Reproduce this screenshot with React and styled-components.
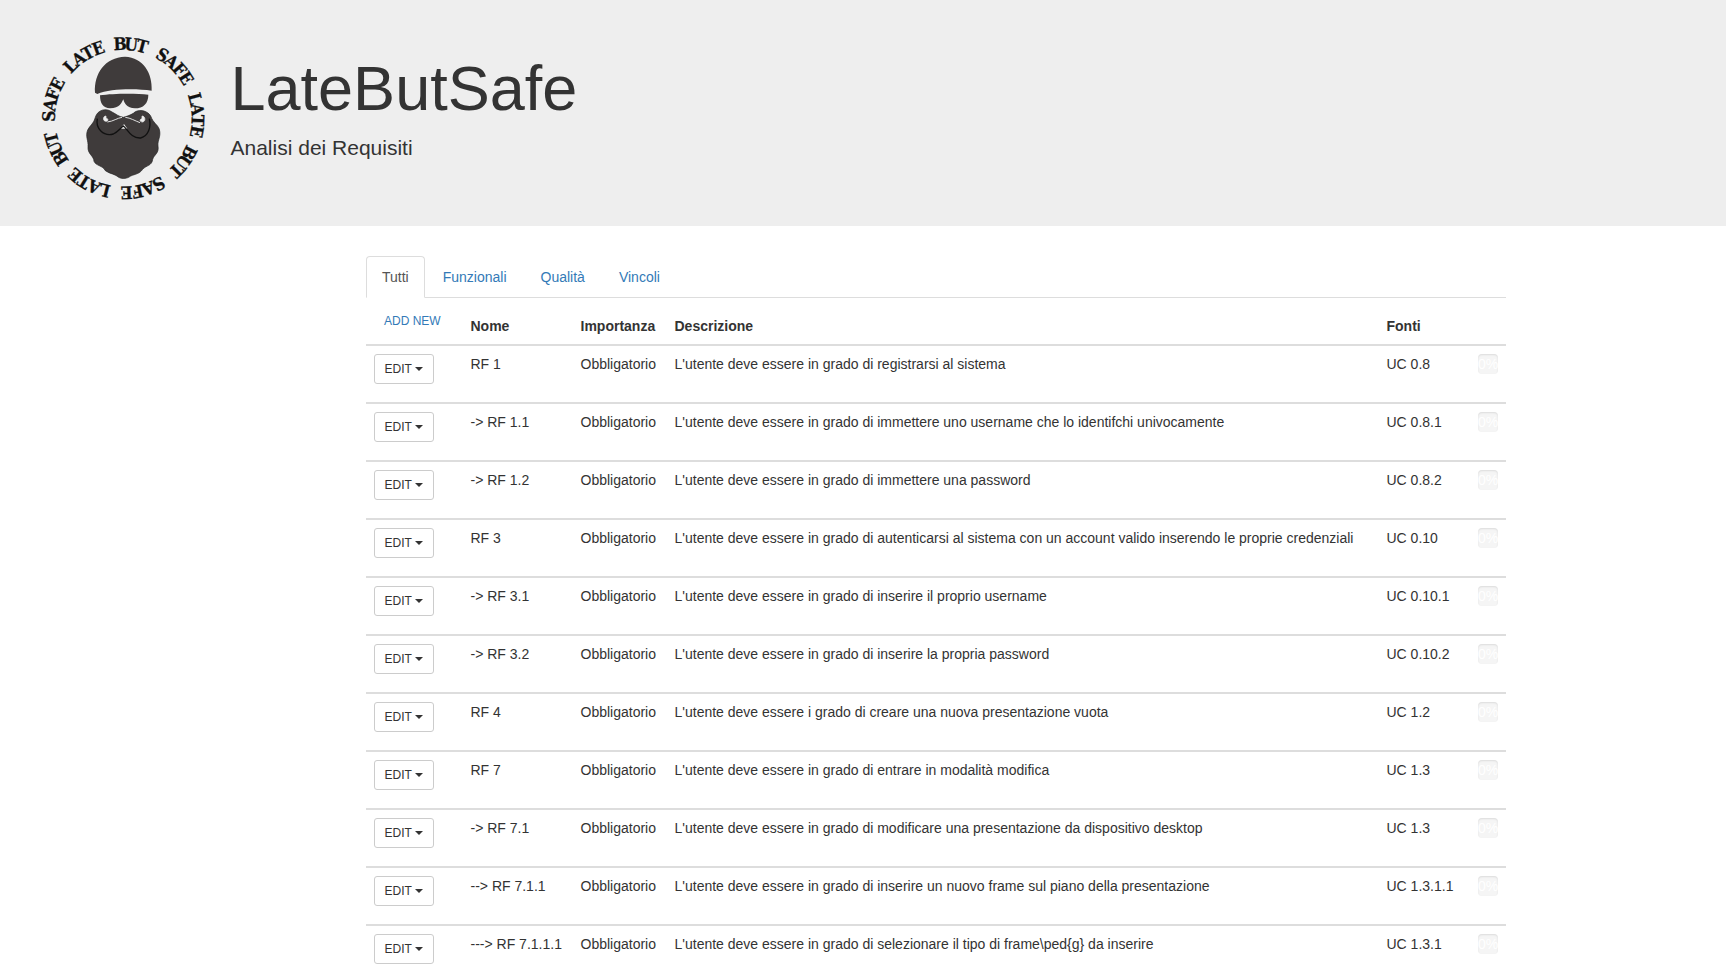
import React from "react";
import styled, { createGlobalStyle } from "styled-components";

const Global = createGlobalStyle`
  html, body { margin: 0; padding: 0; background: #fff; }
  body { font-family: "Liberation Sans", Arial, sans-serif; font-size: 14px; line-height: 20px; color: #333; }
  * { box-sizing: border-box; }
`;

const Jumbotron = styled.header`
  height: 226px; background: #eee; display: flex; align-items: flex-start;
  padding: 20px 0 0 20px; margin-bottom: 30px;
`;
const Titles = styled.div`margin-left: 10.5px;`;
const Title = styled.h1`
  font-size: 63px; line-height: 69px; font-weight: 500; margin: 34px 0 0; color: #333;
`;
const Subtitle = styled.p`
  font-size: 21px; line-height: 30px; font-weight: 200; margin: 10px 0 0; color: #333;
`;
const Container = styled.main`width: 1140px; margin: 0 0 0 366px;`;
const Tabs = styled.ul`
  display: flex; list-style: none; margin: 0; padding: 0; border-bottom: 1px solid #ddd; height: 42px;
`;
const Tab = styled.li`
  margin-right: 2px; height: 42px; padding: 10px 15px; border-radius: 4px 4px 0 0;
  border: 1px solid ${p => (p.$active ? "#ddd" : "transparent")};
  border-bottom-color: ${p => (p.$active ? "#fff" : "transparent")};
  background: ${p => (p.$active ? "#fff" : "transparent")};
  color: ${p => (p.$active ? "#555" : "#337ab7")};
`;
const Table = styled.table`
  width: 1140px; table-layout: fixed; border-collapse: separate; border-spacing: 0;
`;
const Th = styled.th`
  text-align: left; font-weight: 700; padding: 8px; vertical-align: bottom;
  border-bottom: 2px solid #ddd;
`;
const Td = styled.td`
  padding: 8px; vertical-align: top; height: 58px; border-bottom: 2px solid #ddd;
`;
const AddNew = styled.a`
  display: block; font-size: 12px; line-height: 18px; color: #337ab7; padding: 5px 10px;
  margin: 1px 0 1px; white-space: nowrap; font-weight: 400;
`;
const EditButton = styled.button`
  display: inline-flex; align-items: center; height: 30px; width: 60px; padding: 0 0 0 9.5px;
  border: 1px solid #ccc; border-radius: 3px; background: #fff; color: #333;
  font: 12px/18px "Liberation Sans", Arial, sans-serif; white-space: nowrap;
`;
const Caret = styled.span`
  display: inline-block; margin-left: 3.5px; width: 0; height: 0;
  border-top: 4px solid #333; border-left: 4px solid transparent; border-right: 4px solid transparent;
`;
const Progress = styled.div`
  width: 20px; height: 20px; border-radius: 4px; background: #f5f5f5; overflow: hidden;
  box-shadow: inset 0 1px 2px rgba(0,0,0,.1); display: flex; justify-content: center;
  color: #fff; font-size: 14px; line-height: 20px; white-space: nowrap;
`;

const Logo = styled.svg`width: 200px; height: 200px; flex: none;`;

const rows = [
  ["RF 1", "L'utente deve essere in grado di registrarsi al sistema", "UC 0.8"],
  ["-> RF 1.1", "L'utente deve essere in grado di immettere uno username che lo identifchi univocamente", "UC 0.8.1"],
  ["-> RF 1.2", "L'utente deve essere in grado di immettere una password", "UC 0.8.2"],
  ["RF 3", "L'utente deve essere in grado di autenticarsi al sistema con un account valido inserendo le proprie credenziali", "UC 0.10"],
  ["-> RF 3.1", "L'utente deve essere in grado di inserire il proprio username", "UC 0.10.1"],
  ["-> RF 3.2", "L'utente deve essere in grado di inserire la propria password", "UC 0.10.2"],
  ["RF 4", "L'utente deve essere i grado di creare una nuova presentazione vuota", "UC 1.2"],
  ["RF 7", "L'utente deve essere in grado di entrare in modalità modifica", "UC 1.3"],
  ["-> RF 7.1", "L'utente deve essere in grado di modificare una presentazione da dispositivo desktop", "UC 1.3"],
  ["--> RF 7.1.1", "L'utente deve essere in grado di inserire un nuovo frame sul piano della presentazione", "UC 1.3.1.1"],
  ["---> RF 7.1.1.1", "L'utente deve essere in grado di selezionare il tipo di frame\\ped{g} da inserire", "UC 1.3.1"],
];

const RING = "LATE BUT SAFE LATE BUT SAFE LATE BUT SAFE ".split("");

function LogoMark() {
  const dark = "#3f3b3b";
  return (
    <Logo viewBox="0 0 600 600" role="img" aria-label="LateButSafe">
      <g fontFamily="DejaVu Serif Condensed, DejaVu Serif, serif" fontWeight="700" fontSize="52" fill="#111" stroke="#111" strokeWidth="0.8" textAnchor="middle">
        {RING.map((ch, i) => (
          <text key={i} x="310" y="90" transform={`rotate(${6 + ((i - 6) * 360) / RING.length} 310 295)`}>{ch}</text>
        ))}
      </g>
      <path fill={dark} d="M225 218 C222 160 255 112 315 110 C370 112 398 160 395 212 C350 205 270 205 232 222 Z" />
      <path fill={dark} d="M240 226 C280 220 350 220 385 224 C385 250 370 265 345 265 C320 265 312 248 310 238 C305 248 300 265 270 265 C250 265 240 250 240 226 Z" />
      <path fill={dark} stroke="#222" strokeWidth="2" d="M203 330 C195 350 206 362 204 380 C202 402 222 408 222 424 C228 438 248 436 256 452 C270 462 286 462 296 472 C308 478 322 476 332 468 C346 462 358 462 368 448 C378 436 396 438 398 418 C402 404 418 400 414 378 C412 360 424 350 418 328 C412 312 400 310 392 288 C382 270 352 266 340 280 C330 286 318 290 310 292 C296 290 288 282 276 276 C258 262 232 270 226 292 C222 310 210 316 203 330 Z" />
      <path fill="#eee" d="M302 326 L312 312 L322 326 Z" />
      <path fill="none" stroke="#111" strokeWidth="4" d="M232 296 C226 325 250 350 280 342 C294 336 300 326 310 318 C322 326 332 356 362 354 C385 348 394 322 388 296" />
      <path fill="#eee" stroke="#eee" strokeWidth="2" d="M258 288 C248 288 248 304 258 304 C262 304 266 300 262 296 C258 296 258 294 258 288 Z M366 288 C376 288 378 304 368 306 C362 306 358 302 362 298 C366 298 366 294 366 288 Z" />
      <path fill="none" stroke="#ddd" strokeWidth="3" d="M262 306 C280 304 292 294 306 292 M360 308 C344 302 332 294 316 292" />
    </Logo>
  );
}

export default function App() {
  return (
    <>
      <Global />
      <Jumbotron>
        <LogoMark />
        <Titles>
          <Title>LateButSafe</Title>
          <Subtitle>Analisi dei Requisiti</Subtitle>
        </Titles>
      </Jumbotron>
      <Container>
        <Tabs>
          <Tab $active>Tutti</Tab>
          <Tab>Funzionali</Tab>
          <Tab>Qualità</Tab>
          <Tab>Vincoli</Tab>
        </Tabs>
        <Table>
          <colgroup>
            <col style={{ width: 96.5 }} />
            <col style={{ width: 110 }} />
            <col style={{ width: 94 }} />
            <col style={{ width: 712 }} />
            <col style={{ width: 91.5 }} />
            <col style={{ width: 36 }} />
          </colgroup>
          <thead>
            <tr>
              <Th><AddNew>ADD NEW</AddNew></Th>
              <Th>Nome</Th>
              <Th>Importanza</Th>
              <Th>Descrizione</Th>
              <Th>Fonti</Th>
              <Th />
            </tr>
          </thead>
          <tbody>
            {rows.map(([name, desc, src]) => (
              <tr key={name}>
                <Td><EditButton>EDIT<Caret /></EditButton></Td>
                <Td>{name}</Td>
                <Td>Obbligatorio</Td>
                <Td>{desc}</Td>
                <Td>{src}</Td>
                <Td><Progress>0%</Progress></Td>
              </tr>
            ))}
          </tbody>
        </Table>
      </Container>
    </>
  );
}
